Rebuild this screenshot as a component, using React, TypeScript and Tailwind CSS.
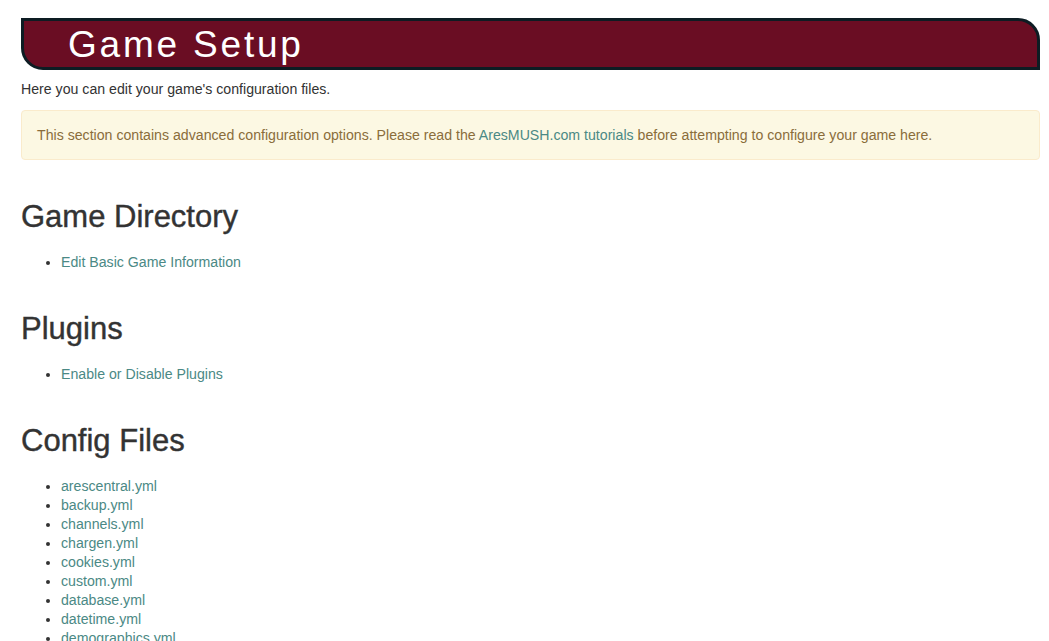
const configFiles = [
  'arescentral.yml',
  'backup.yml',
  'channels.yml',
  'chargen.yml',
  'cookies.yml',
  'custom.yml',
  'database.yml',
  'datetime.yml',
  'demographics.yml',
  'describe.yml',
  'discord.yml',
];

function Section({ title, items }: { title: string; items: string[] }) {
  return (
    <section>
      <h2 className="mb-[20px] text-[31px] leading-[33px] text-[#333333] [-webkit-text-stroke:0.4px_#333333]">
        {title}
      </h2>
      <ul className="mb-[40px] list-disc pl-[40px]">
        {items.map((item) => (
          <li key={item} className="leading-[19px]">
            <a href="#" className="text-[#4b8985] hover:underline">
              {item}
            </a>
          </li>
        ))}
      </ul>
    </section>
  );
}

export default function App() {
  return (
    <div
      className="min-h-screen bg-white pl-[21px] pr-[9px] pt-[18px] text-[14.15px] text-[#333333]"
      style={{ fontFamily: '"Liberation Sans", Arial, Helvetica, sans-serif' }}
    >
      <div className="flex h-[52px] items-center rounded-tr-[22px] rounded-bl-[22px] border-[3px] border-[#0d1c23] bg-[#6a0d23] pl-[44px]">
        <h1 className="text-[37px] leading-none tracking-[2.8px] text-white">Game Setup</h1>
      </div>

      <p className="mt-[9px] mb-[11px] leading-[20px]">Here you can edit your game's configuration files.</p>

      <div className="mb-[40px] rounded-[4px] border border-[#faebcc] bg-[#fcf8e3] px-[15px] py-[14px] leading-[20px] text-[#8a6d3b]">
        This section contains advanced configuration options. Please read the{' '}
        <a href="#" className="text-[#4b8985]">
          AresMUSH.com tutorials
        </a>{' '}
        before attempting to configure your game here.
      </div>

      <Section title="Game Directory" items={['Edit Basic Game Information']} />
      <Section title="Plugins" items={['Enable or Disable Plugins']} />
      <Section title="Config Files" items={configFiles} />
    </div>
  );
}
